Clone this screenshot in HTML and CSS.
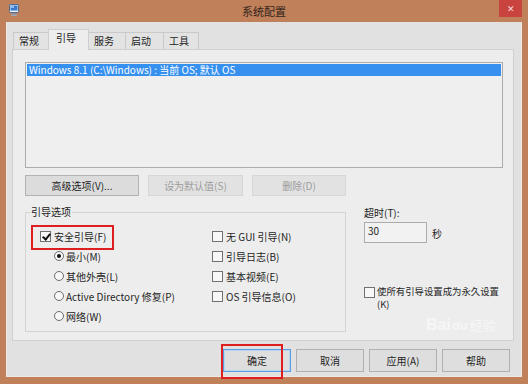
FILE: index.html
```html
<!DOCTYPE html>
<html lang="zh-CN">
<head>
<meta charset="utf-8">
<title>系统配置</title>
<link rel="stylesheet" href="styles.css">
</head>
<body>
<div class="window">
  <div class="titlebar">
    <div class="tb-left">
      <svg class="app-icon" width="10" height="12" viewBox="0 0 10 12">
        <rect x="0.5" y="0.5" width="9" height="8" rx="0.5" fill="#e8eef6" stroke="#5a6f8c"/>
        <rect x="1.5" y="1.5" width="7" height="5" fill="#3b78c9"/>
        <rect x="2" y="2" width="3" height="2" fill="#8fc0f0"/>
        <rect x="3.5" y="9" width="3" height="1.5" fill="#7d8da3"/>
        <rect x="2" y="10.5" width="6" height="1.5" fill="#9aa8ba"/>
      </svg>
    </div>
    <div class="title">系统配置</div>
    <div class="tb-right"><div class="close">✕</div></div>
  </div>

  <div class="client">
    <div class="tabs">
      <div class="tab w35">常规</div>
      <div class="tab active">引导</div>
      <div class="tab w37">服务</div>
      <div class="tab w38">启动</div>
      <div class="tab w35">工具</div>
    </div>

    <div class="panel">
      <div class="listbox">
        <div class="list-item selected">Windows 8.1 (C:\Windows) : 当前 OS; 默认 OS</div>
      </div>

      <div class="btn-row">
        <div class="btn w114">高级选项(V)...</div>
        <div class="btn w95 disabled">设为默认值(S)</div>
        <div class="btn w94 disabled">删除(D)</div>
      </div>

      <div class="lower">
        <fieldset class="group">
          <legend>引导选项</legend>
          <div class="group-grid">
            <div class="col col-left">
              <div class="opt annotated"><span class="cb checked"></span>安全引导(F)</div>
              <div class="opt sub"><span class="rb checked"></span>最小(M)</div>
              <div class="opt sub"><span class="rb"></span>其他外壳(L)</div>
              <div class="opt sub"><span class="rb"></span>Active Directory 修复(P)</div>
              <div class="opt sub"><span class="rb"></span>网络(W)</div>
            </div>
            <div class="col">
              <div class="opt"><span class="cb"></span>无 GUI 引导(N)</div>
              <div class="opt"><span class="cb"></span>引导日志(B)</div>
              <div class="opt"><span class="cb"></span>基本视频(E)</div>
              <div class="opt"><span class="cb"></span>OS 引导信息(O)</div>
            </div>
          </div>
        </fieldset>

        <div class="timeout">
          <div class="lbl">超时(T):</div>
          <div class="tin-row">
            <div class="tin">30</div>
            <span class="unit">秒</span>
          </div>
          <div class="perm">
            <span class="cb"></span>
            <span class="perm-text">使所有引导设置成为永久设置<br>(K)</span>
          </div>
          <div class="watermark"><span class="wm-bai">Bai</span><span class="wm-paw">du</span><span class="wm-jy">经验</span></div>
        </div>
      </div>
    </div>

    <div class="footer">
      <div class="btn big default annotated-btn">确定</div>
      <div class="btn big">取消</div>
      <div class="btn big">应用(A)</div>
      <div class="btn big">帮助</div>
    </div>
  </div>
</div>
</body>
</html>
```

FILE: styles.css
```css
* { box-sizing: border-box; }

html, body {
  margin: 0;
  padding: 0;
}

body {
  width: 528px;
  height: 384px;
  overflow: hidden;
  font-family: "Noto Sans CJK SC", "Noto Sans", sans-serif;
  font-size: 10px;
  color: #1e1e1e;
}

.window {
  width: 528px;
  height: 384px;
  background: #c0805a;
  display: flex;
  flex-direction: column;
}

/* Title bar */
.titlebar {
  height: 22px;
  display: grid;
  grid-template-columns: 1fr auto 1fr;
  align-items: start;
}

.tb-left {
  padding: 4px 0 0 9px;
  display: flex;
}

.title {
  font-size: 11px;
  line-height: 22px;
  color: #33241a;
}

.tb-right {
  justify-self: end;
  padding-right: 6px;
}

.close {
  width: 23px;
  height: 17px;
  background: #c9433f;
  color: #f6dede;
  font-size: 9px;
  line-height: 17px;
  text-align: center;
}

/* Client area */
.client {
  flex: 1;
  margin: 0 6px 7px 6px;
  background: #e1e1e1;
  border: 1px solid #efe9e5;
  border-top: none;
  padding: 8px 7px 0 5px;
  display: flex;
  flex-direction: column;
}

/* Tabs */
.tabs {
  display: flex;
  align-items: flex-end;
  height: 19px;
  margin-left: 1px;
  position: relative;
  z-index: 2;
}

.tab {
  height: 17px;
  border: 1px solid #c9c9c9;
  border-bottom: none;
  background: #e3e3e3;
  margin-right: -1px;
  padding-left: 5px;
  line-height: 16px;
  color: #222;
}

.tab.w35 { width: 36px; }
.tab.w37 { width: 38px; }
.tab.w38 { width: 39px; }

.tab.active {
  width: 41px;
  height: 21px;
  margin-bottom: -1px;
  background: #ededed;
  padding-left: 7px;
  line-height: 16px;
  border-color: #cfcfcf;
  position: relative;
  z-index: 3;
}

/* Panel */
.panel {
  height: 292px;
  background: #ededed;
  border: 1px solid #d0d0d0;
  padding: 12px 10px 0 12px;
  display: flex;
  flex-direction: column;
}

.listbox {
  height: 106px;
  border: 1px solid #acacac;
  background: #efefef;
  padding: 1px;
}

.list-item {
  height: 12px;
  line-height: 12px;
  padding-left: 2px;
  white-space: nowrap;
}

.list-item.selected {
  background: #3690ef;
  color: #ffffff;
}

/* Buttons */
.btn-row {
  display: flex;
  gap: 9px;
  margin-top: 7px;
}

.btn {
  height: 21px;
  border: 1px solid #b3b3b3;
  background: #dcdcdc;
  text-align: center;
  line-height: 19px;
  color: #1e1e1e;
}

.btn.w114 { width: 114px; }
.btn.w95 { width: 95px; }
.btn.w94 { width: 94px; }

.btn.disabled {
  background: #e2e2e2;
  border-color: #d6d6d6;
  color: #9d9d9d;
}

/* Lower area */
.lower {
  display: flex;
  margin-top: 8px;
}

.group {
  width: 321px;
  height: 128px;
  margin: 0;
  padding: 0 0 5px 0;
  border: 1px solid #d4d4d4;
  min-width: 0;
}

.group legend {
  margin-left: 4px;
  padding: 0 1px;
  line-height: 16px;
  font-size: 10px;
  color: #222;
}

.group-grid {
  display: grid;
  grid-template-columns: 172px 1fr;
  padding: 6px 0 0 14px;
}

.col {
  display: flex;
  flex-direction: column;
}

.opt {
  height: 20px;
  display: flex;
  align-items: center;
  white-space: nowrap;
  position: relative;
}

.opt.sub {
  padding-left: 14px;
}

.cb {
  width: 11px;
  height: 11px;
  border: 1px solid #707070;
  background: #f7f7f7;
  margin-right: 3px;
  flex: none;
  position: relative;
}

.cb.checked::after {
  content: "";
  position: absolute;
  left: 3px;
  top: 0px;
  width: 3px;
  height: 6px;
  border-right: 2px solid #111;
  border-bottom: 2px solid #111;
  transform: rotate(40deg);
}

.rb {
  width: 10px;
  height: 10px;
  border: 1px solid #6d6d6d;
  border-radius: 50%;
  background: #f7f7f7;
  margin-right: 2px;
  flex: none;
  position: relative;
}

.rb.checked::after {
  content: "";
  position: absolute;
  left: 2px;
  top: 2px;
  width: 4px;
  height: 4px;
  border-radius: 50%;
  background: #111;
}

/* red annotation boxes */
.annotated::before {
  content: "";
  position: absolute;
  left: -9px;
  top: -1px;
  width: 79px;
  height: 21px;
  border: 2px solid #dd1f1f;
}

.annotated-btn {
  position: relative;
}

.annotated-btn::after {
  content: "";
  position: absolute;
  left: -3px;
  top: -6px;
  width: 58px;
  height: 31px;
  border: 2px solid #dd1f1f;
}

/* Timeout column */
.timeout {
  margin-left: 18px;
  display: flex;
  flex-direction: column;
}

.lbl {
  margin-top: 1px;
  line-height: 16px;
}

.tin-row {
  display: flex;
  align-items: center;
  margin-top: 1px;
}

.tin {
  width: 63px;
  height: 21px;
  border: 1px solid #acacac;
  background: #f2f2f2;
  padding: 2px 0 0 3px;
  line-height: 12px;
}

.unit {
  margin-left: 5px;
  margin-top: 2px;
}

.perm {
  display: flex;
  align-items: flex-start;
  margin-top: 42px;
}

.perm .cb {
  margin-top: 2px;
  margin-right: 2px;
}

.perm-text {
  line-height: 13px;
  font-size: 9.4px;
  white-space: nowrap;
}

/* watermark */
.watermark {
  margin-top: 6px;
  margin-left: 62px;
  display: flex;
  align-items: baseline;
  font-family: "Liberation Sans", sans-serif;
  line-height: 16px;
  color: rgba(255, 255, 255, 0.55);
  white-space: nowrap;
}

.wm-bai { font-size: 16px; font-weight: bold; }
.wm-paw { font-size: 13px; font-weight: bold; margin-left: 1px; }
.wm-jy { font-family: "Noto Sans CJK SC", sans-serif; font-size: 13px; margin-left: 2px; }

/* Footer */
.footer {
  display: flex;
  justify-content: flex-end;
  gap: 5px;
  padding: 8px 4px 0 0;
}

.btn.big {
  width: 68px;
  height: 23px;
  line-height: 21px;
  background: #dedede;
  border-color: #b0b0b0;
}

.btn.big.default {
  border-color: #5b9de0;
  box-shadow: inset 0 0 0 1px #b8d6f2;
}
```
